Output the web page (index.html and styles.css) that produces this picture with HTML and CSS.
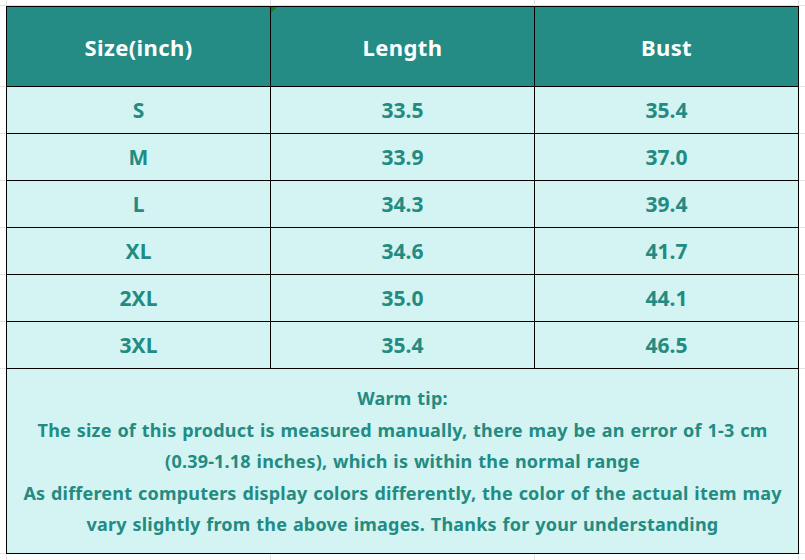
FILE: index.html
```html
<!DOCTYPE html>
<html lang="en">
<head>
<meta charset="utf-8">
<title>Size chart</title>
<link rel="stylesheet" href="styles.css">
</head>
<body>
<div class="sheet">
  <div class="chart">
    <div class="cell head">Size(inch)</div>
    <div class="cell head mark">Length</div>
    <div class="cell head">Bust</div>

    <div class="cell">S</div><div class="cell">33.5</div><div class="cell">35.4</div>
    <div class="cell">M</div><div class="cell">33.9</div><div class="cell">37.0</div>
    <div class="cell">L</div><div class="cell">34.3</div><div class="cell">39.4</div>
    <div class="cell">XL</div><div class="cell">34.6</div><div class="cell">41.7</div>
    <div class="cell">2XL</div><div class="cell">35.0</div><div class="cell">44.1</div>
    <div class="cell">3XL</div><div class="cell">35.4</div><div class="cell">46.5</div>

    <div class="cell tip">
      <p>Warm tip:</p>
      <p>The size of this product is measured manually, there may be an error of 1-3 cm<br>(0.39-1.18 inches), which is within the normal range</p>
      <p>As different computers display colors differently, the color of the actual item may<br>vary slightly from the above images. Thanks for your understanding</p>
    </div>
  </div>
</div>
</body>
</html>
```
FILE: styles.css
```css
html, body {
  margin: 0;
  padding: 0;
}
body {
  width: 805px;
  height: 560px;
  overflow: hidden;
  font-family: "Noto Sans", "Open Sans", sans-serif;
  background-color: #ffffff;
  background-image:
    linear-gradient(#e2e2e2, #e2e2e2),
    linear-gradient(#e2e2e2, #e2e2e2),
    linear-gradient(#e2e2e2, #e2e2e2),
    linear-gradient(#e2e2e2, #e2e2e2),
    linear-gradient(#e2e2e2, #e2e2e2),
    linear-gradient(#e2e2e2, #e2e2e2),
    linear-gradient(#e2e2e2, #e2e2e2),
    linear-gradient(#e2e2e2, #e2e2e2),
    linear-gradient(#e2e2e2, #e2e2e2),
    linear-gradient(#e2e2e2, #e2e2e2),
    linear-gradient(#e2e2e2, #e2e2e2),
    linear-gradient(#e2e2e2, #e2e2e2),
    linear-gradient(#e2e2e2, #e2e2e2);
  background-repeat: no-repeat;
  background-size:
    1px 100%, 1px 100%, 1px 100%, 1px 100%,
    100% 1px, 100% 1px, 100% 1px, 100% 1px, 100% 1px,
    100% 1px, 100% 1px, 100% 1px, 100% 1px;
  background-position:
    6px 0, 270px 0, 534px 0, 798px 0,
    0 5px, 0 86px, 0 133px, 0 180px, 0 227px,
    0 274px, 0 321px, 0 368px, 0 553px;
}
.sheet {
  padding: 6px 0 0 6px;
}
.chart {
  display: grid;
  grid-template-columns: 264px 264px 264px;
  grid-template-rows: 80px repeat(6, 47px) 185px;
  width: 792px;
  border-left: 1px solid #000;
  border-top: 1px solid #000;
}
.cell {
  position: relative;
  box-sizing: border-box;
  border-right: 1px solid #000;
  border-bottom: 1px solid #000;
  background: #d3f4f2;
  color: #238b82;
  font-weight: 700;
  font-size: 21px;
  display: flex;
  align-items: center;
  justify-content: center;
  text-align: center;
}
.head {
  background: #248c84;
  color: #ffffff;
  font-size: 22px;
  letter-spacing: 0.4px;
}
.mark::before {
  content: "";
  position: absolute;
  left: 0;
  top: 0;
  width: 0;
  height: 0;
  border-top: 6px solid #1f7d1f;
  border-right: 6px solid transparent;
}
.tip {
  grid-column: 1 / 4;
  flex-direction: column;
  font-size: 18px;
  line-height: 31.5px;
  letter-spacing: 0.2px;
  word-spacing: 0.9px;
  padding-top: 2px;
}
.tip p {
  margin: 0;
}
```
